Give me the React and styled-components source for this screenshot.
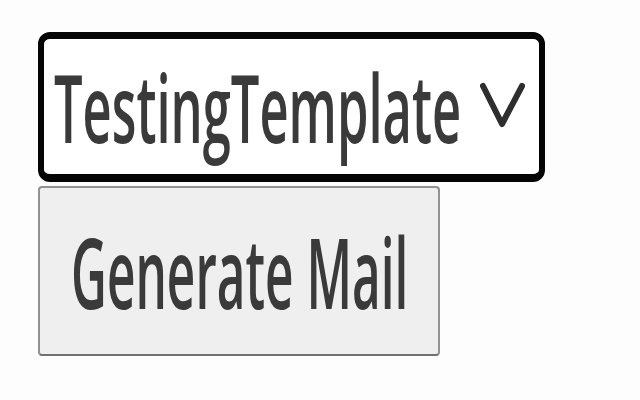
import React from "react";
import styled, { createGlobalStyle } from "styled-components";

const Global = createGlobalStyle`
  html, body { margin: 0; padding: 0; background: #fdfdfd; }
  body { font-family: "Open Sans", "Noto Sans", sans-serif; }
`;

const Page = styled.div`
  width: 640px;
  height: 400px;
  box-sizing: border-box;
  padding: 32px 0 0 38px;
  display: flex;
  flex-direction: column;
  align-items: flex-start;
  gap: 4px;
  overflow: hidden;
`;

const Select = styled.div`
  box-sizing: border-box;
  width: 507px;
  height: 150px;
  border: 6px solid #050505;
  border-top-width: 7px;
  border-bottom-width: 8px;
  border-radius: 12px;
  background: #fff;
  display: flex;
  align-items: center;
  padding-left: 10px;
`;

const Slot = styled.div`
  width: ${(p) => p.$w}px;
  white-space: nowrap;
  flex: none;
`;

const Squeezed = styled.span`
  display: inline-block;
  font-size: ${(p) => p.$size}px;
  line-height: 1;
  font-weight: 600;
  color: #3a3a3a;
  transform: scaleX(${(p) => p.$k});
  transform-origin: left center;
`;

const Chevron = styled.svg`
  margin-left: 20px;
  margin-top: -4px;
  flex: none;
`;

const Button = styled.button`
  box-sizing: border-box;
  width: 402px;
  height: 170px;
  border: 2px solid #929292;
  border-bottom-color: #707070;
  border-radius: 4px;
  background: #efefef;
  padding: 0 0 0 31px;
  display: flex;
  align-items: center;
  font-family: inherit;
`;

export default function App() {
  return (
    <>
      <Global />
      <Page>
        <Select>
          <Slot $w={406}>
            <Squeezed $size={95} $k={0.533}>TestingTemplate</Squeezed>
          </Slot>
          <Chevron width="46" height="46" viewBox="0 0 46 46">
            <polyline
              points="3,4 22,42 42,4"
              fill="none"
              stroke="#2e2e2e"
              strokeWidth="6"
              strokeLinecap="round"
              strokeLinejoin="round"
            />
          </Chevron>
        </Select>
        <Button>
          <Slot $w={340}>
            <Squeezed $size={98} $k={0.505}>Generate Mail</Squeezed>
          </Slot>
        </Button>
      </Page>
    </>
  );
}
